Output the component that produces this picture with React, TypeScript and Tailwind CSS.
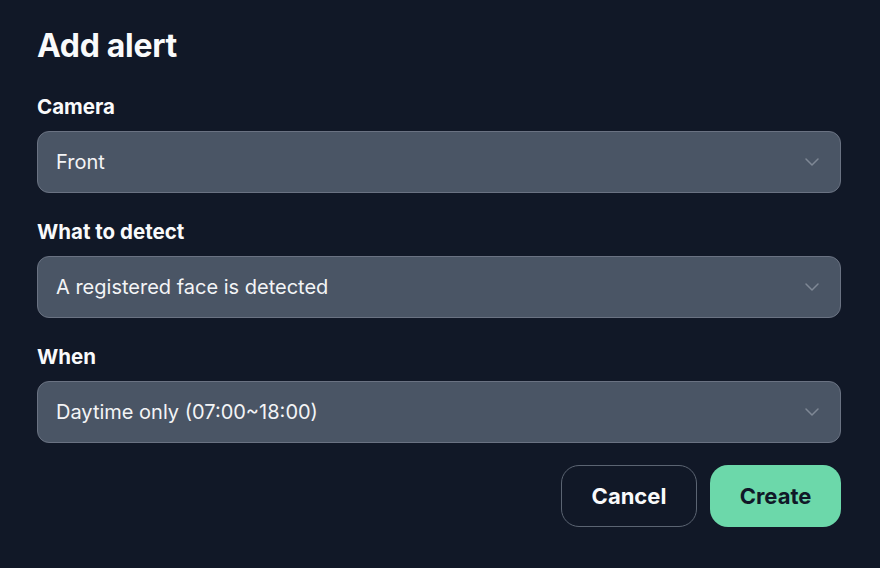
import { ChevronDown } from 'lucide-react';

const fields = [
  { label: 'Camera', value: 'Front' },
  { label: 'What to detect', value: 'A registered face is detected' },
  { label: 'When', value: 'Daytime only (07:00~18:00)' },
];

export default function App() {
  return (
    <div
      className="min-h-[568px] w-full bg-[#111827] pl-[37px] pr-[39px] pt-[26px] text-white"
      style={{ fontFamily: 'Inter, "Noto Sans", sans-serif' }}
    >
      <h1 className="text-[32px] font-bold leading-10 tracking-[-0.01em] text-gray-50">Add alert</h1>

      <div className="mt-[27px] space-y-[25px]">
        {fields.map((f) => (
          <div key={f.label}>
            <label className="block text-[20.5px] font-bold leading-7 text-gray-50">{f.label}</label>
            <div className="mt-[10px] flex h-[62px] items-center justify-between rounded-xl border border-gray-500 bg-gray-600 pl-[18px] pr-[16px]">
              <span className="text-xl text-gray-100">{f.value}</span>
              <ChevronDown className="h-6 w-6 text-[#7f8895]" strokeWidth={1.5} />
            </div>
          </div>
        ))}
      </div>

      <div className="mt-[22px] flex justify-end gap-[13px]">
        <button className="h-[62px] w-[136px] rounded-[18px] border border-[#5b6472] text-[22px] font-bold text-gray-50">
          Cancel
        </button>
        <button className="h-[62px] w-[131px] rounded-[18px] bg-[#6cd8aa] text-[22px] font-bold text-gray-900">
          Create
        </button>
      </div>
    </div>
  );
}
